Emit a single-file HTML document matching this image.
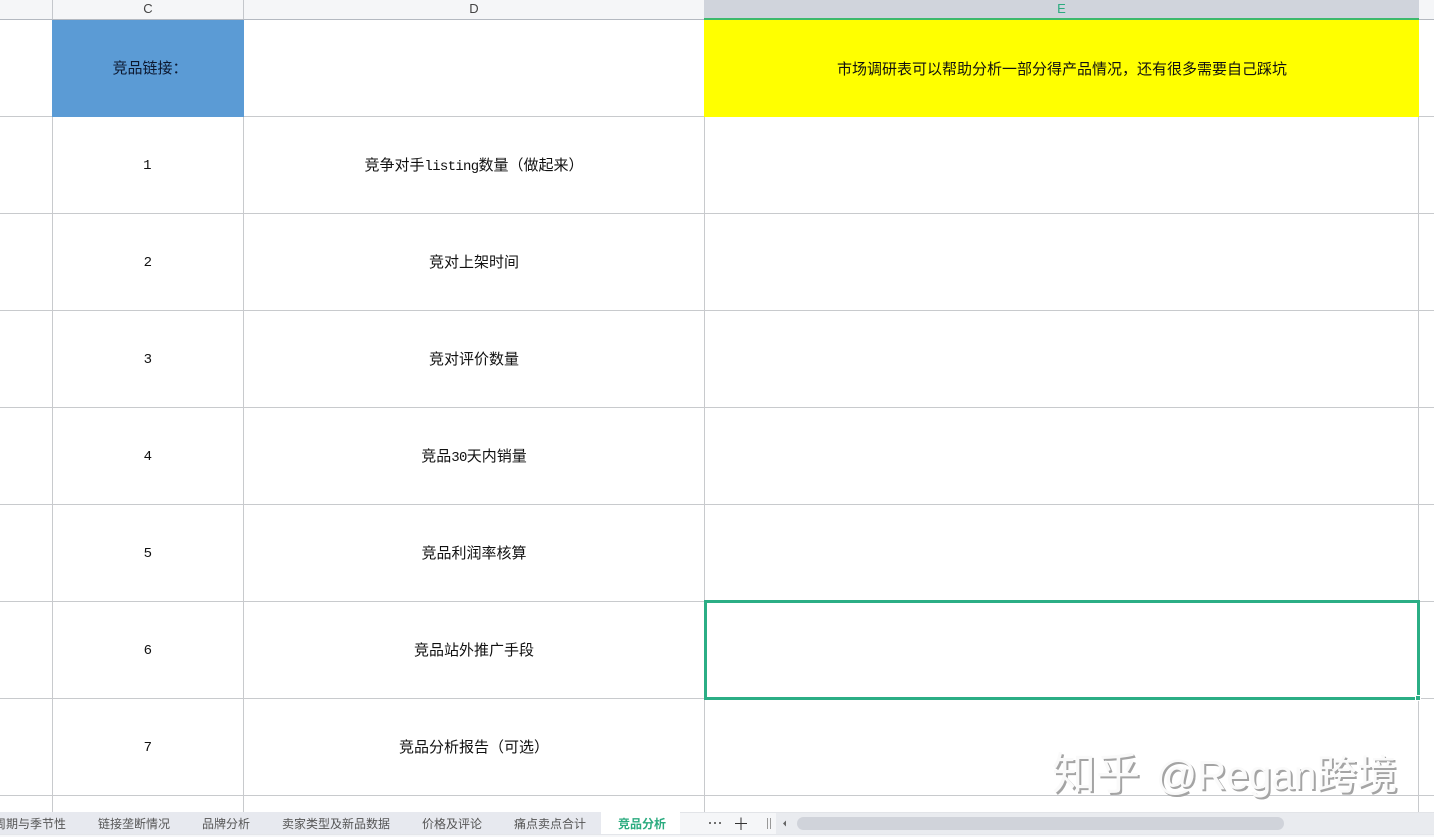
<!DOCTYPE html>
<html lang="zh">
<head>
<meta charset="utf-8">
<style>
html,body{margin:0;padding:0;width:1434px;height:837px;overflow:hidden;background:#fff}
body{position:relative;font-family:"Liberation Mono","WenQuanYi Zen Hei","Noto Sans CJK SC",monospace;color:#111}
div{position:absolute;box-sizing:border-box}
.h{left:0;width:1434px;height:1px;background:#c8cacd}
.v{top:20px;width:1px;height:792px;background:#c8cacd}
.t{font-size:15px;line-height:20px;text-align:center;white-space:nowrap}
.t span{font-size:14px;letter-spacing:-.7px}
.hd{top:0;height:19px;font:13px/17px "Liberation Sans",sans-serif;color:#444;text-align:center}
.tab{top:812px;height:22px;font:12px/24px "Liberation Sans","Noto Sans CJK SC",sans-serif;color:#555;white-space:nowrap}
.wm{top:749px;font-family:"Liberation Sans","Noto Sans CJK SC",sans-serif;line-height:52px;color:#fafafa;text-shadow:2px 2px 0 #a4a4a4;white-space:nowrap}
</style>
</head>
<body>
<div style="left:0;top:0;width:1434px;height:19px;background:#f5f6f8"></div>
<div style="left:704px;top:0;width:715px;height:19px;background:#d0d4dc"></div>
<div style="left:0;top:19px;width:1434px;height:1px;background:#b4b9c1"></div>
<div style="left:52px;top:0;width:1px;height:19px;background:#c4c7cc"></div>
<div style="left:243px;top:0;width:1px;height:19px;background:#c4c7cc"></div>

<div class="hd" style="left:53px;width:190px">C</div>
<div class="hd" style="left:244px;width:460px">D</div>
<div class="hd" style="left:705px;width:713px;color:#2bab7f">E</div>

<div class="h" style="top:116px"></div>
<div class="h" style="top:213px"></div>
<div class="h" style="top:310px"></div>
<div class="h" style="top:407px"></div>
<div class="h" style="top:504px"></div>
<div class="h" style="top:601px"></div>
<div class="h" style="top:698px"></div>
<div class="h" style="top:795px"></div>
<div class="v" style="left:52px"></div>
<div class="v" style="left:243px;top:117px;height:695px"></div>
<div class="v" style="left:704px;top:117px;height:695px"></div>
<div class="v" style="left:1418px"></div>

<div style="left:52px;top:20px;width:192px;height:97px;background:#5b9bd5"></div>
<div style="left:704px;top:20px;width:715px;height:97px;background:#ffff00"></div>
<div style="left:704px;top:18px;width:715px;height:2px;background:#3cb96b"></div>

<div class="t" style="left:55px;width:190px;top:60px;color:#0c1830">竞品链接：</div>
<div class="t" style="left:705px;width:714px;top:61px">市场调研表可以帮助分析一部分得产品情况，还有很多需要自己踩坑</div>

<div class="t" style="left:53px;width:188px;top:156px"><span>1</span></div>
<div class="t" style="left:53px;width:189px;top:253px"><span>2</span></div>
<div class="t" style="left:53px;width:189px;top:350px"><span>3</span></div>
<div class="t" style="left:53px;width:189px;top:447px"><span>4</span></div>
<div class="t" style="left:53px;width:189px;top:544px"><span>5</span></div>
<div class="t" style="left:53px;width:189px;top:641px"><span>6</span></div>
<div class="t" style="left:53px;width:189px;top:738px"><span>7</span></div>

<div class="t" style="left:244px;width:460px;top:157px">竞争对手<span>listing</span>数量（做起来）</div>
<div class="t" style="left:244px;width:460px;top:254px">竞对上架时间</div>
<div class="t" style="left:244px;width:460px;top:351px">竞对评价数量</div>
<div class="t" style="left:244px;width:460px;top:448px">竞品<span>30</span>天内销量</div>
<div class="t" style="left:244px;width:460px;top:545px">竞品利润率核算</div>
<div class="t" style="left:244px;width:460px;top:642px">竞品站外推广手段</div>
<div class="t" style="left:244px;width:460px;top:739px">竞品分析报告（可选）</div>

<div style="left:704px;top:600px;width:716px;height:100px;border:3px solid #2bae85"></div>
<div style="left:1415px;top:695px;width:6px;height:6px;background:#2bae85;border:1px solid #fff"></div>

<div class="wm" style="left:1052px;font-size:44px">知乎</div>
<div class="wm" style="left:1156px;font-size:40.5px">@Regan跨境</div>

<div style="left:0;top:812px;width:1434px;height:25px;background:#f5f6f8"></div>
<div style="left:0;top:812px;width:601px;height:22px;background:#e7e9ef"></div>
<div style="left:601px;top:812px;width:79px;height:22px;background:#fff"></div>
<div style="left:680px;top:812px;width:754px;height:1px;background:#e2e4e8"></div>
<div style="left:0;top:834px;width:1434px;height:1px;background:#e4e6ea"></div>
<div class="tab" style="left:-6px">周期与季节性</div>
<div class="tab" style="left:98px">链接垄断情况</div>
<div class="tab" style="left:202px">品牌分析</div>
<div class="tab" style="left:282px">卖家类型及新品数据</div>
<div class="tab" style="left:422px">价格及评论</div>
<div class="tab" style="left:514px">痛点卖点合计</div>
<div class="tab" style="left:618px;color:#2bab7f;font-weight:bold">竞品分析</div>

<svg style="position:absolute;left:680px;top:812px" width="754" height="22" viewBox="0 0 754 22">
<rect x="96" y="1" width="658" height="21" fill="#e9ebef"/>
<rect x="117" y="5" width="487" height="13" rx="6.5" fill="#d0d3da"/>
<circle cx="30" cy="11" r="1" fill="#444"/><circle cx="35" cy="11" r="1" fill="#444"/><circle cx="40" cy="11" r="1" fill="#444"/>
<path d="M55 11.5H67M61 5.5V18" stroke="#333" stroke-width="1" fill="none"/>
<path d="M87.5 6V17M90.5 6V17" stroke="#999" stroke-width="1" fill="none"/>
<path d="M106 8.5L103 11.5L106 14.5Z" fill="#666"/>
</svg>
</body>
</html>
